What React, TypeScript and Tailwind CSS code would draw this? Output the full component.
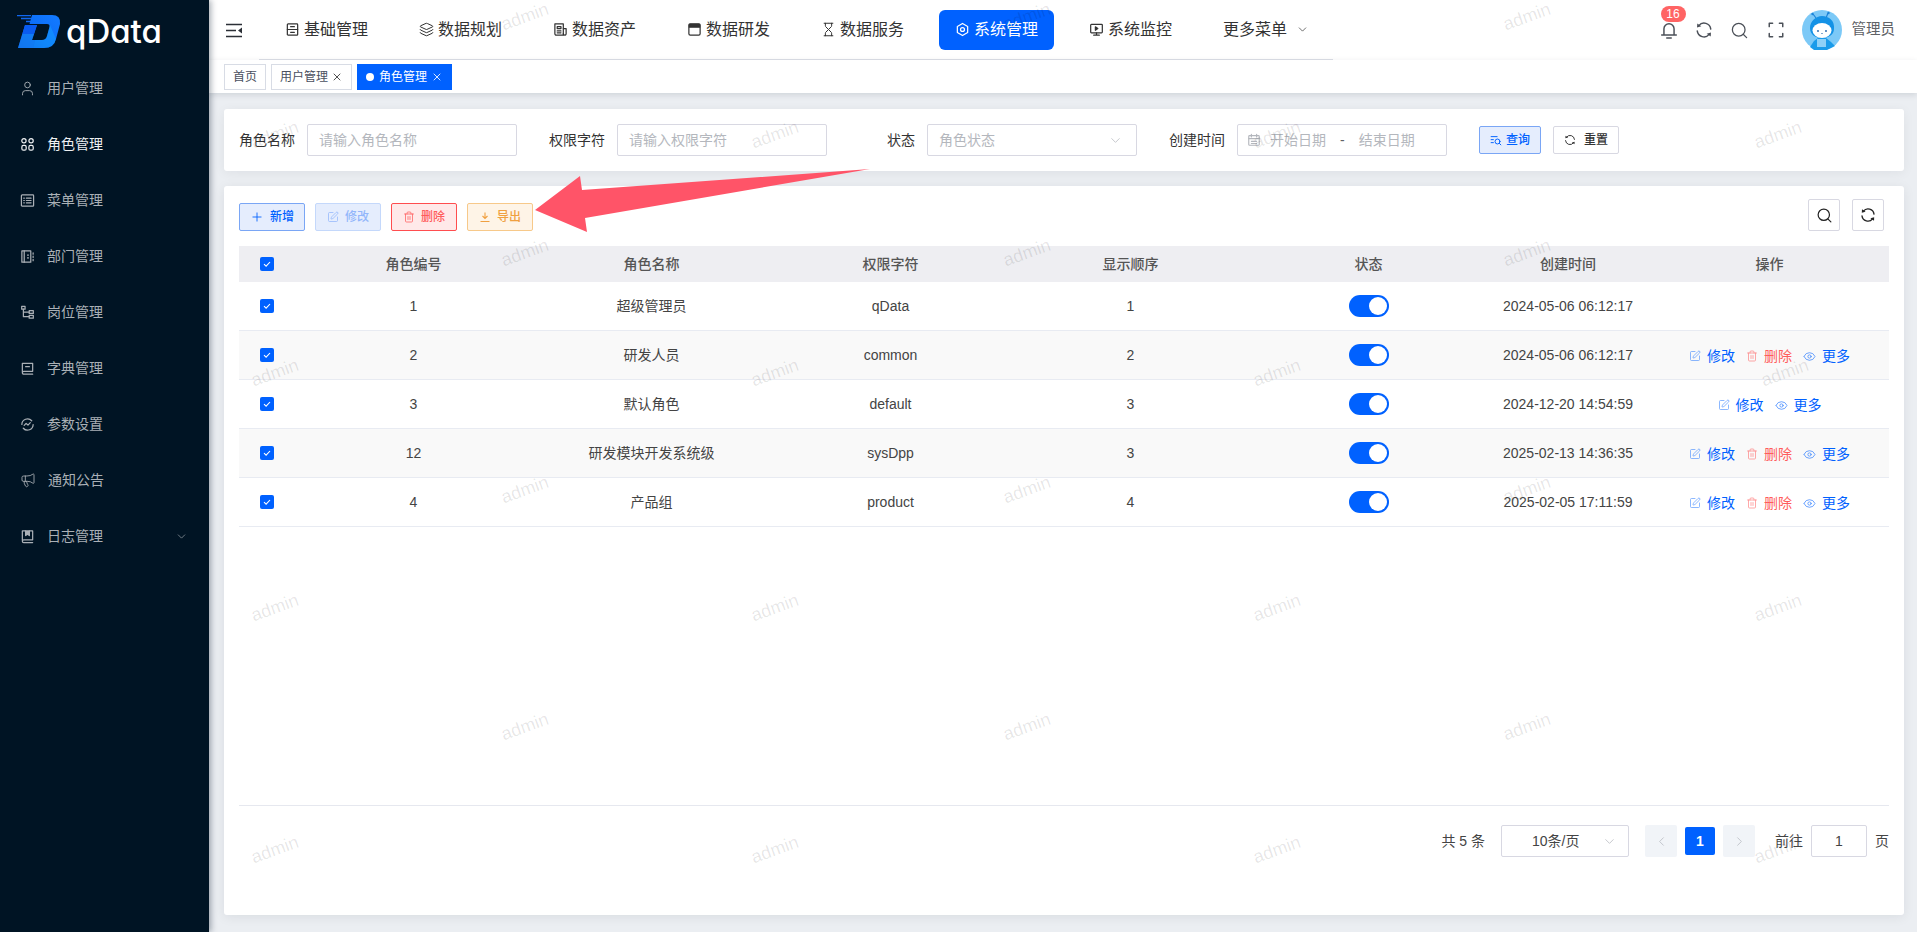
import type { ReactNode } from 'react';
import { ChevronDown, ChevronLeft, ChevronRight, Eye, Hourglass, Layers, Megaphone, Plus, Search, SquarePen, Trash2, User, X } from 'lucide-react';

const Svg = ({ size = 14, children, className = '' }: { size?: number; children: ReactNode; className?: string }) => (
  <svg width={size} height={size} viewBox="0 0 16 16" fill="none" stroke="currentColor" strokeWidth="1.3" strokeLinecap="round" strokeLinejoin="round" className={`shrink-0 ${className}`}>
    {children}
  </svg>
);

const Refresh = ({ size = 16, className = '' }: { size?: number; className?: string }) => (
  <Svg size={size} className={className}>
    <path d="M2 8.800A6 6 0 0 0 12.600 11.900" />
    <path d="M14 7.200A6 6 0 0 0 3.400 4.100" />
    <path d="M2 2.200l3.600 2.500-3.800 1z" fill="currentColor" stroke="none" />
    <path d="M14 13.800l-3.600-2.500 3.800-1z" fill="currentColor" stroke="none" />
  </Svg>
);

const sideIcons: Record<string, ReactNode> = {
  user: <User size={17} strokeWidth={1.300} className="-ml-[1px] -mr-[1px]" />,
  role: (
    <Svg size={15}>
      <circle cx="4.200" cy="4" r="2.300" />
      <circle cx="11.800" cy="4" r="2.300" />
      <rect x="2" y="9" width="4.600" height="5" rx="1.600" />
      <rect x="9.500" y="9" width="4.600" height="5" rx="1.600" />
    </Svg>
  ),
  menu: (
    <Svg size={15}>
      <rect x="1.500" y="2" width="13" height="12" rx="0.800" />
      <path d="M4 5.500h.6M4 8h.6M4 10.500h.6M6.800 5.500h5M6.800 8h5M6.800 10.500h5" />
    </Svg>
  ),
  dept: (
    <Svg size={15}>
      <path d="M2 2h9.500v12H2z" />
      <path d="M4.500 2v12M14 4v1.500M14 7.500v1.500M14 11v1.500" />
      <path d="M8 6.500h1M8 9.500h1" />
    </Svg>
  ),
  post: (
    <Svg size={15}>
      <rect x="1.800" y="1.500" width="3.600" height="3" />
      <rect x="9.800" y="6" width="4.400" height="3" />
      <rect x="9.800" y="11" width="4.400" height="3" />
      <path d="M3.600 4.500v8h6.200M3.600 7.500h6.200" />
    </Svg>
  ),
  dict: (
    <Svg size={15}>
      <path d="M2.500 12V2.500h11V11H4a1.500 1.500 0 0 0 0 3h9.500" />
      <path d="M6 6h4" />
    </Svg>
  ),
  param: (
    <Svg size={15}>
      <path d="M2 8a6 6 0 0 1 10.500-4M14 8a6 6 0 0 1-10.500 4" />
      <path d="M4.500 9l2-2.200 2 1.800 2.500-2.600" />
    </Svg>
  ),
  notice: <Megaphone size={16} strokeWidth={1.300} />,
  log: (
    <Svg size={15}>
      <path d="M2.500 12V2h11v9.500H4a1.500 1.500 0 0 0 0 3h9.500" />
      <path d="M6 2v5l2-1.300L10 7V2" fill="currentColor" />
    </Svg>
  ),
};

const sideItems = [
  ['user', '用户管理'],
  ['role', '角色管理'],
  ['menu', '菜单管理'],
  ['dept', '部门管理'],
  ['post', '岗位管理'],
  ['dict', '字典管理'],
  ['param', '参数设置'],
  ['notice', '通知公告'],
  ['log', '日志管理'],
];

const topItems: { label: string; icon: ReactNode; active?: boolean }[] = [
  {
    label: '基础管理',
    icon: (
      <Svg size={15}>
        <rect x="2.500" y="2" width="11" height="12" rx="0.800" />
        <path d="M2.500 8h11M6 5h4M6 11h4" />
      </Svg>
    ),
  },
  { label: '数据规划', icon: <Layers size={15} strokeWidth={1.600} /> },
  {
    label: '数据资产',
    icon: (
      <Svg size={15}>
        <path d="M2 2h9v12H3.500A1.500 1.500 0 0 1 2 12.500z" />
        <path d="M11 7h3v5.500a1.500 1.500 0 0 1-3 0M4.500 5h4v2h-4zM4.500 9.500h4M4.500 11.500h4" />
      </Svg>
    ),
  },
  {
    label: '数据研发',
    icon: (
      <Svg size={15}>
        <rect x="2" y="2" width="12" height="12" rx="1.500" />
        <path d="M2.500 2.500h11v3h-11z" fill="currentColor" />
      </Svg>
    ),
  },
  { label: '数据服务', icon: <Hourglass size={15} strokeWidth={1.600} /> },
  {
    label: '系统管理',
    active: true,
    icon: (
      <Svg size={15}>
        <path d="M8 1.500l5.500 3.200v6.600L8 14.500l-5.500-3.200V4.700z" />
        <circle cx="8" cy="8" r="2.100" />
      </Svg>
    ),
  },
  {
    label: '系统监控',
    icon: (
      <Svg size={15}>
        <rect x="1.800" y="2.500" width="12.400" height="9" rx="0.800" />
        <path d="M5 14h6M8 11.500V14" />
        <path d="M6.800 5.200l2.600 1.800-2.600 1.800z" fill="currentColor" />
      </Svg>
    ),
  },
];

const rows = [
  { id: '1', name: '超级管理员', key: 'qData', sort: '1', time: '2024-05-06 06:12:17', ops: [] as string[] },
  { id: '2', name: '研发人员', key: 'common', sort: '2', time: '2024-05-06 06:12:17', ops: ['edit', 'del', 'more'] },
  { id: '3', name: '默认角色', key: 'default', sort: '3', time: '2024-12-20 14:54:59', ops: ['edit', 'more'] },
  { id: '12', name: '研发模块开发系统级', key: 'sysDpp', sort: '3', time: '2025-02-13 14:36:35', ops: ['edit', 'del', 'more'] },
  { id: '4', name: '产品组', key: 'product', sort: '4', time: '2025-02-05 17:11:59', ops: ['edit', 'del', 'more'] },
];

const cols = 'grid grid-cols-[56px_237px_239px_239px_241px_235px_164px_239px] items-center text-center';

const marks: [number, number][] = [
  [525, 17], [1027, 17], [1527, 17],
  [275, 135], [775, 135], [1277, 135], [1778, 135],
  [525, 253], [1027, 253], [1527, 253],
  [275, 373], [775, 373], [1277, 373], [1785, 373],
  [525, 490], [1027, 490], [1527, 490],
  [275, 608], [775, 608], [1277, 608], [1778, 608],
  [525, 727], [1027, 727], [1527, 727],
  [275, 850], [775, 850], [1277, 850], [1778, 850],
];

function Check() {
  return (
    <span className="flex h-[14px] w-[14px] items-center justify-center rounded-[2px] bg-[#0061ff]">
      <svg width="10" height="10" viewBox="0 0 10 10" fill="none" stroke="#fff" strokeWidth="1.100">
        <path d="M2 5.200l2.100 2L8 3" />
      </svg>
    </span>
  );
}

function Logo() {
  return (
    <svg width="46" height="34" viewBox="0 0 46 34" className="shrink-0">
      <defs>
        <linearGradient id="logoD" x1="0" y1="1" x2="1" y2="0.2">
          <stop offset="0" stopColor="#0a4fe0" />
          <stop offset="0.45" stopColor="#0b6cf5" />
          <stop offset="1" stopColor="#1279ff" />
        </linearGradient>
      </defs>
      <path d="M1 0.500h14M5 3.500h12M10 6.500h6" stroke="#1067f0" strokeWidth="1.400" />
      <path fillRule="evenodd" fill="url(#logoD)" d="M16 0H36Q45 0 44 9L40 24Q38 33 28 33H2L9 10H21L16 25H26Q30 25 31 21L33.500 12Q34 9 31 9H13.500Z" />
      <path d="M9 10H21L18 19H6.300Z" fill="#0a5cf0" />
      <path d="M6.300 19H18L16 25H19L17 33H2Z" fill="#1486f5" opacity="0.700" />
      <path d="M19 25H26Q30 25 31 21L34 10L40 24Q38 33 28 33H17Z" fill="#17a6ff" opacity="0.450" />
    </svg>
  );
}

function Avatar() {
  return (
    <svg width="40" height="40" viewBox="0 0 40 40" className="shrink-0">
      <circle cx="20" cy="20" r="20" fill="#7cc9f7" />
      <path d="M11 4l3 4M26 3l-2 5" stroke="#1d84d8" strokeWidth="1.200" />
      <circle cx="10.500" cy="4" r="1.200" fill="#1d84d8" />
      <circle cx="26.500" cy="3" r="1.200" fill="#1d84d8" />
      <path d="M20 6c7 0 13 5 12 13 0 6-6 9-12 9S8 25 8 18c0-7 6-12 12-12z" fill="#1492e6" />
      <ellipse cx="20" cy="20.500" rx="9.500" ry="7.500" fill="#fff" />
      <circle cx="16" cy="21" r="0.900" fill="#1d5fa8" />
      <circle cx="24" cy="21" r="0.900" fill="#1d5fa8" />
      <path d="M19.300 23.500h1.400" stroke="#1d5fa8" strokeWidth="0.800" />
      <path d="M8 37l4-6 4-3h8l5 4 4 4-8 4H12z" fill="#1a9bea" />
      <path d="M15 29h9v8h-9z" fill="#8ed0f7" />
    </svg>
  );
}

function ToolButton({ icon, label, className }: { icon: ReactNode; label: string; className: string }) {
  return (
    <button className={`flex h-[28px] w-[66px] items-center justify-center gap-[6px] rounded-[2px] border text-[12px] ${className}`}>
      {icon}
      <span>{label}</span>
    </button>
  );
}

function Field({ label, className, children }: { label: string; className: string; children: ReactNode }) {
  return (
    <div className={`flex items-center ${className}`}>
      <span className="mr-[12px] text-[14px] text-[#333]">{label}</span>
      {children}
    </div>
  );
}

function Op({ kind }: { kind: string }) {
  if (kind === 'del')
    return (
      <span className="flex items-center gap-[6px] text-[#ff5c5c]">
        <Trash2 size={12} strokeWidth={1.500} className="opacity-70" />
        删除
      </span>
    );
  if (kind === 'edit')
    return (
      <span className="flex items-center gap-[6px] text-[#0061ff]">
        <SquarePen size={12} strokeWidth={1.500} className="opacity-60" />
        修改
      </span>
    );
  return (
    <span className="flex items-center gap-[6px] text-[#0061ff]">
      <Eye size={13} strokeWidth={1.500} className="opacity-70" />
      更多
    </span>
  );
}

export default function App() {
  return (
    <div className="relative flex h-screen w-full overflow-hidden bg-[#ebeef2] [font-family:'Liberation_Sans','Noto_Sans_CJK_SC',sans-serif]">
      {/* sidebar */}
      <aside className="z-10 flex w-[209px] shrink-0 flex-col bg-[#001424] shadow-[2px_0_6px_rgba(0,21,41,0.35)]">
        <div className="flex h-[60px] items-start pl-[16px] pt-[15px]">
          <Logo />
          <span className="ml-[4px] mt-[-7px] text-[33px] leading-[46px] font-medium text-white [font-family:Inter,sans-serif] [font-feature-settings:'cv11']">qData</span>
        </div>
        <nav>
          {sideItems.map(([icon, label]) => (
            <div key={label} className={`flex h-[56px] items-center pl-[20px] pr-[21px] text-[14px] ${label === '角色管理' ? 'text-[#eef0f2]' : 'text-[#aab0b6]'}`}>
              {sideIcons[icon]}
              <span className="ml-[12px]">{label}</span>
              {label === '日志管理' && <ChevronDown size={13} strokeWidth={1.200} className="ml-auto" />}
            </div>
          ))}
        </nav>
      </aside>

      <div className="flex min-w-0 flex-1 flex-col">
        {/* header */}
        <header className="flex h-[60px] shrink-0 items-center bg-white">
          <svg width="17" height="15" viewBox="0 0 17 15" fill="none" stroke="#2b2f36" strokeWidth="1.500" className="ml-[17px] shrink-0">
            <path d="M0 1.500h16M0 7.500h10M0 13.500h16" />
            <path d="M16 4.500v6l-4-3z" fill="#2b2f36" stroke="none" />
          </svg>
          <nav className="ml-[16px] flex h-full w-[1074px] shrink-0 items-center gap-[19px] border-b border-[#dcdfe6] pl-[10px]">
            {topItems.map((item) => (
              <div key={item.label} className={`flex h-[40px] shrink-0 items-center gap-[4px] whitespace-nowrap rounded-[6px] px-[16px] text-[16px] ${item.active ? 'bg-[#0061ff] text-white' : 'text-[#333]'}`}>
                {item.icon}
                <span>{item.label}</span>
              </div>
            ))}
            <div className="flex h-[40px] shrink-0 items-center whitespace-nowrap px-[16px] text-[16px] text-[#333]">
              更多菜单
              <ChevronDown size={13} strokeWidth={1.300} className="ml-[9px]" />
            </div>
          </nav>
          <div className="ml-auto flex items-center pr-[22px] text-[#4b5058]">
            <div className="relative -ml-[1px] flex h-[36px] w-[36px] items-center justify-center">
              <Svg size={18} className="translate-y-[1px]">
                <path d="M3.500 11.500V6a4.500 4.500 0 0 1 9 0v5.500M1.500 11.500h13M6 14.300h4" />
              </Svg>
              <span className="absolute left-[10px] top-[-6px] flex h-[16px] w-[25px] items-center justify-center rounded-full bg-[#ff6464] text-[12px] text-white">16</span>
            </div>
            <div className="-ml-[1px] flex h-[36px] w-[36px] items-center justify-center">
              <Refresh size={18} />
            </div>
            <div className="flex h-[36px] w-[36px] items-center justify-center">
              <Search size={19} strokeWidth={1.600} />
            </div>
            <div className="flex h-[36px] w-[36px] items-center justify-center">
              <Svg size={18}>
                <path d="M2 5V2h3M11 2h3v3M14 11v3h-3M5 14H2v-3" />
              </Svg>
            </div>
            <div className="ml-[8px]">
              <Avatar />
            </div>
            <span className="ml-[10px] text-[14.500px] text-[#606266]">管理员</span>
          </div>
        </header>

        {/* tags */}
        <div className="z-[5] flex h-[33px] shrink-0 items-start gap-[5px] bg-white pl-[15px] pt-[4px] shadow-[0_2px_6px_rgba(0,21,41,0.12)]">
          <span className="flex h-[26px] w-[42px] items-center justify-center border border-[#d8dce5] text-[12px] text-[#495060]">首页</span>
          <span className="flex h-[26px] w-[81px] items-center justify-center gap-[3px] border border-[#d8dce5] text-[12px] text-[#495060]">
            用户管理
            <X size={12} strokeWidth={1.700} className="text-[#333]" />
          </span>
          <span className="flex h-[26px] w-[95px] items-center justify-center gap-[4px] bg-[#0061ff] text-[12px] text-white">
            <span className="mr-[1px] h-[8px] w-[8px] rounded-full bg-white" />
            角色管理
            <X size={12} strokeWidth={1.700} />
          </span>
        </div>

        {/* content */}
        <main className="flex min-h-0 flex-1 flex-col gap-[15px] pb-[17px] pl-[15px] pr-[13px] pt-[16px]">
          <section className="flex h-[62px] shrink-0 items-center rounded-[3px] bg-white pl-[15px] shadow-[0_2px_12px_rgba(0,21,41,0.06)]">
            <Field label="角色名称" className="">
              <div className="flex h-[32px] w-[210px] items-center rounded-[2px] border border-[#d8d8e2] pl-[11px] text-[14px] text-[#b4b7bd]">请输入角色名称</div>
            </Field>
            <Field label="权限字符" className="ml-[32px]">
              <div className="flex h-[32px] w-[210px] items-center rounded-[2px] border border-[#d8d8e2] pl-[11px] text-[14px] text-[#b4b7bd]">请输入权限字符</div>
            </Field>
            <Field label="状态" className="ml-[60px]">
              <div className="flex h-[32px] w-[210px] items-center justify-between rounded-[2px] border border-[#d8d8e2] pl-[11px] pr-[13px] text-[14px] text-[#b4b7bd]">
                角色状态
                <ChevronDown size={15} strokeWidth={1.200} />
              </div>
            </Field>
            <Field label="创建时间" className="ml-[32px]">
              <div className="flex h-[32px] w-[210px] items-center rounded-[2px] border border-[#d8d8e2] pl-[9px] text-[14px] text-[#b4b7bd]">
                <Svg size={14}>
                  <rect x="2" y="3" width="12" height="11" rx="1" />
                  <path d="M2 6.500h12M5 1.500v3M11 1.500v3M5 9.500h6M5 12h6" />
                </Svg>
                <span className="ml-[9px]">开始日期</span>
                <span className="ml-[14px] text-[#606266]">-</span>
                <span className="ml-[14px]">结束日期</span>
              </div>
            </Field>
            <button className="ml-[32px] flex h-[28px] w-[62px] items-center justify-center gap-[4px] rounded-[2px] border border-[#7aa6f5] bg-[#e5edfd] text-[12px] font-medium text-[#0061ff]">
              <Svg size={12}>
                <path d="M1.500 3.500h8M1.500 7.500h3M1.500 11.500h3" />
                <circle cx="10" cy="10" r="3.300" />
                <path d="M12.500 12.500l2 2" />
              </Svg>
              查询
            </button>
            <button className="ml-[12px] flex h-[28px] w-[66px] items-center justify-center gap-[8px] rounded-[2px] border border-[#d8d8e2] text-[12px] font-medium text-[#333]">
              <Refresh size={12} />
              重置
            </button>
          </section>

          <section className="flex min-h-0 flex-1 flex-col rounded-[3px] bg-white px-[15px] pt-[13px] shadow-[0_2px_12px_rgba(0,21,41,0.08)]">
            <div className="mb-[15px] flex h-[32px] shrink-0 items-end gap-[10px]">
              <ToolButton icon={<Plus size={14} strokeWidth={1.500} />} label="新增" className="border-[#7aa6f5] bg-[#e5edfd] font-medium text-[#0061ff]" />
              <ToolButton icon={<SquarePen size={12} strokeWidth={1.500} />} label="修改" className="border-[#c4d8fb] bg-[#e5edfd] font-medium text-[#92b6fb]" />
              <ToolButton icon={<Trash2 size={12} strokeWidth={1.500} />} label="删除" className="border-[#ff4d4f] bg-[#ffe9e9] font-medium text-[#ff5c5c]" />
              <ToolButton icon={<svg width="12" height="12" viewBox="0 0 12 12" fill="none" stroke="currentColor" strokeWidth="1.100"><path d="M6 1.500v6M3.500 5L6 7.500 8.500 5M1.500 10.500h9" /></svg>} label="导出" className="border-[#f7c98a] bg-[#fef4e7] font-medium text-[#f0a040]" />
              <div className="ml-auto flex items-center gap-[12px] self-stretch pr-[5px]">
                <span className="flex h-[32px] w-[32px] items-center justify-center rounded-[2px] border border-[#d8d8e2] text-[#222]">
                  <Search size={17} strokeWidth={1.700} />
                </span>
                <span className="flex h-[32px] w-[32px] items-center justify-center rounded-[2px] border border-[#d8d8e2] text-[#222]">
                  <Refresh size={16} />
                </span>
              </div>
            </div>

            <div className="min-h-0 flex-1 border-b border-[#e6e8ef] text-[14px] text-[#444]">
              <div className={`${cols} h-[36px] bg-[#eeeef2] font-medium text-[#555]`}>
                <span className="flex justify-center">
                  <Check />
                </span>
                <span>角色编号</span>
                <span>角色名称</span>
                <span>权限字符</span>
                <span>显示顺序</span>
                <span>状态</span>
                <span>创建时间</span>
                <span>操作</span>
              </div>
              {rows.map((r, i) => (
                <div key={r.id} className={`${cols} h-[49px] border-b border-[#e8ebf2] ${i % 2 === 1 ? 'bg-[#f9f9f9]' : 'bg-white'}`}>
                  <span className="flex justify-center">
                    <Check />
                  </span>
                  <span>{r.id}</span>
                  <span>{r.name}</span>
                  <span>{r.key}</span>
                  <span>{r.sort}</span>
                  <span className="flex justify-center">
                    <span className="flex h-[22px] w-[40px] items-center justify-end rounded-full bg-[#0061ff] pr-[2px]">
                      <span className="h-[18px] w-[18px] rounded-full bg-white" />
                    </span>
                  </span>
                  <span>{r.time}</span>
                  <span className="flex translate-y-[1px] justify-center gap-[11px] text-[14px]">
                    {r.ops.map((op) => (
                      <Op key={op} kind={op} />
                    ))}
                  </span>
                </div>
              ))}
            </div>

            <div className="flex h-[109px] shrink-0 items-start justify-end pt-[19px] text-[14px] text-[#444]">
              <span className="mr-[16px] flex h-[32px] items-center">共 5 条</span>
              <div className="mr-[16px] flex h-[32px] w-[128px] items-center justify-between rounded-[2px] border border-[#d8d8e2] pl-[30px] pr-[11px]">
                10条/页
                <ChevronDown size={15} strokeWidth={1.200} className="text-[#b4b7bd]" />
              </div>
              <span className="flex h-[32px] w-[32px] items-center justify-center rounded-[2px] bg-[#f1f4f8] text-[#b4b7bd]">
                <ChevronLeft size={15} strokeWidth={1.200} />
              </span>
              <span className="mx-[8px] mt-[2px] flex h-[28px] w-[30px] items-center justify-center rounded-[2px] bg-[#0061ff] font-semibold text-white">1</span>
              <span className="flex h-[32px] w-[32px] items-center justify-center rounded-[2px] bg-[#f1f4f8] text-[#b4b7bd]">
                <ChevronRight size={15} strokeWidth={1.200} />
              </span>
              <span className="ml-[20px] flex h-[32px] items-center">前往</span>
              <span className="ml-[8px] flex h-[32px] w-[56px] items-center justify-center rounded-[2px] border border-[#d8d8e2]">1</span>
              <span className="ml-[8px] flex h-[32px] items-center">页</span>
            </div>
          </section>
        </main>
      </div>

      {/* watermark */}
      {marks.map(([x, y]) => (
        <span
          key={`${x}-${y}`}
          className="pointer-events-none absolute z-[6] -translate-x-1/2 -translate-y-1/2 -rotate-[20deg] text-[18px] text-black/10"
          style={{ left: x, top: y }}
        >
          admin
        </span>
      ))}

      {/* annotation arrow */}
      <svg className="pointer-events-none absolute inset-0 z-20 h-full w-full" fill="#ff5468">
        <polygon points="870,169 582,190 580,176 535,210 587,232 585,218" />
      </svg>
    </div>
  );
}
